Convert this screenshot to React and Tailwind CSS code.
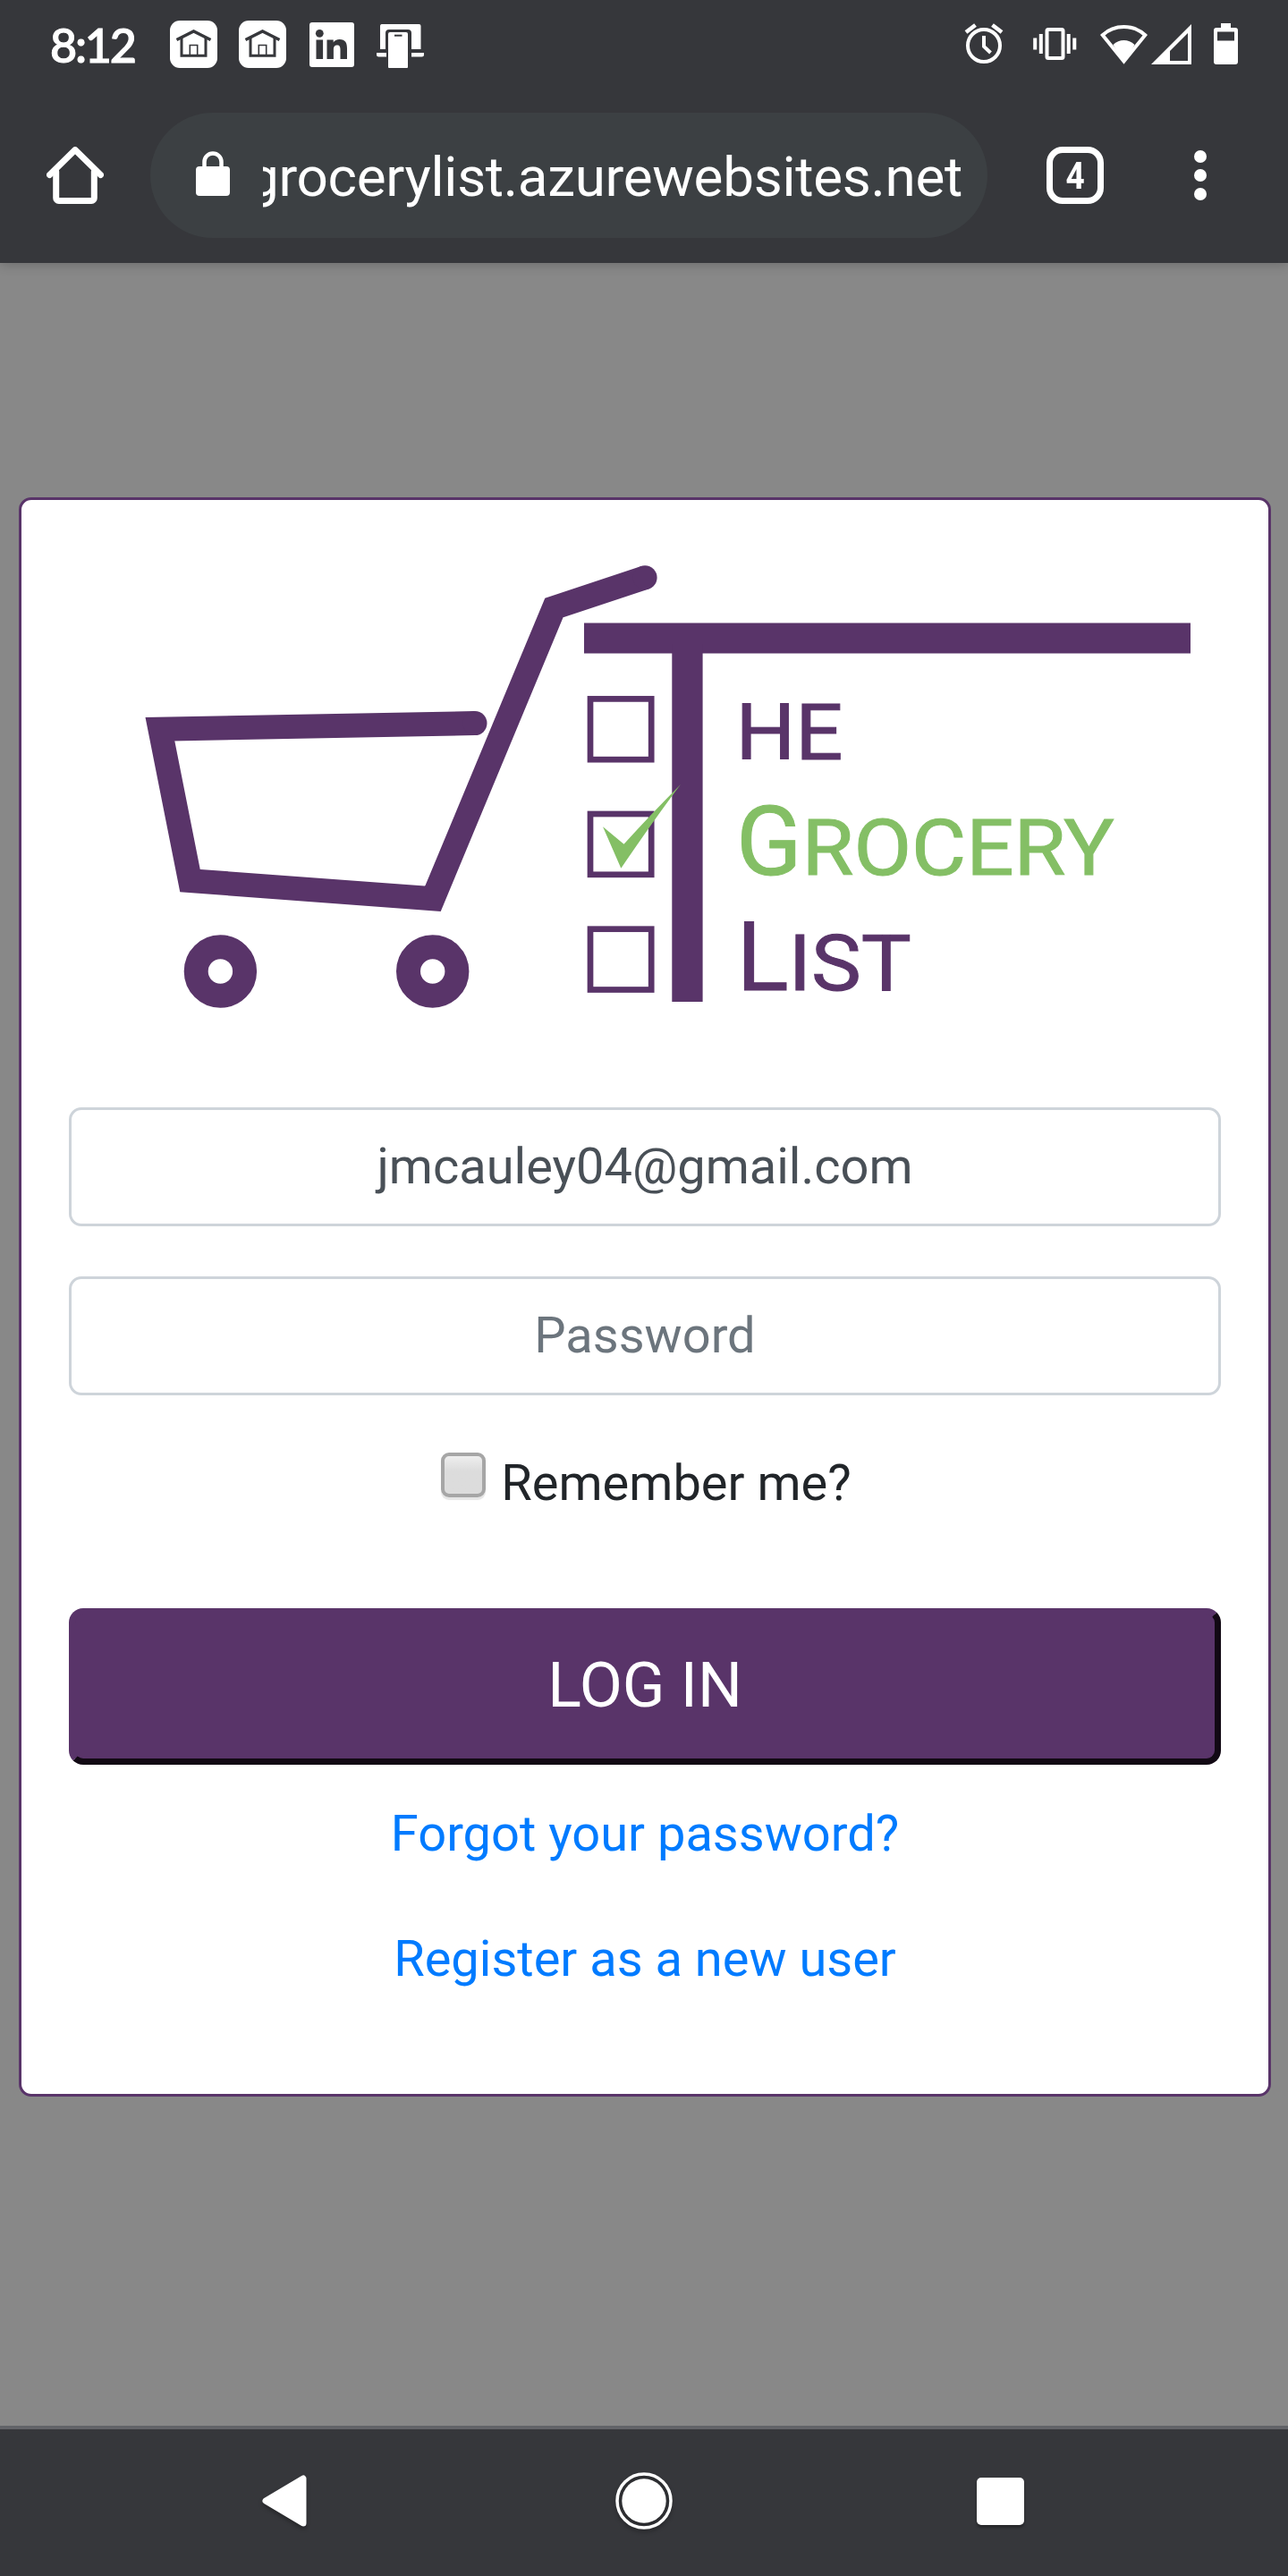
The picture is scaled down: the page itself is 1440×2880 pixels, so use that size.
const PURPLE = '#593469';
const GREEN = '#84bf65';
const BAR = '#36373b';

function HomeBadge() {
  return (
    <svg className="block h-[53px] w-[53px]" viewBox="0 0 53 53">
      <rect width="53" height="53" rx="11" fill="#fff" />
      <path d="M7.5 21.5 26.5 12l19 9.5" fill="none" stroke={BAR} strokeWidth="3.4" />
      <path d="M13 19v20.3h27V19" fill="none" stroke={BAR} strokeWidth="3" />
      <path d="M22.3 38V27.5h8.4V38" fill="none" stroke={BAR} strokeWidth="1.6" />
    </svg>
  );
}

function LinkedInBadge() {
  return (
    <svg className="block h-[50px] w-[50px]" viewBox="0 0 50 50">
      <rect width="50" height="50" rx="3" fill="#fff" />
      <circle cx="11.3" cy="12.3" r="4.4" fill={BAR} />
      <path
        d="M7.5 19.5h7.6V41H7.5zM19.5 19.5h7.2v3c1.2-2.1 3.8-3.5 7-3.5 6.5 0 8.3 4.2 8.3 10.3V41h-7.5V30.5c0-2.9-.6-5-3.6-5-3.1 0-4 2.2-4 5V41h-7.4z"
        fill={BAR}
      />
    </svg>
  );
}

function PhoneCastBadge() {
  return (
    <svg className="block h-[50px] w-[53px]" viewBox="0 0 53 50">
      <path d="M5.500 0h42a2 2 0 0 1 2 2v26H39V10a4 4 0 0 0-4-4H14a4 4 0 0 0-4 4v18H4V2a2 2 0 0 1 1.500-2z" fill="#fff" />
      <path d="M0 32h11v4.500H2.500A2.500 2.500 0 0 1 0 34zM39 32h14v2a2.500 2.500 0 0 1-2.500 2.500H39z" fill="#fff" />
      <path d="M15 9h18a2 2 0 0 1 2 2v37a1 1 0 0 1-1 1H14a1 1 0 0 1-1-1V11a2 2 0 0 1 2-2z" fill="#fff" />
      <path d="M20 12.700h8.500" stroke={BAR} strokeWidth="2" />
    </svg>
  );
}

function AlarmIcon() {
  return (
    <svg className="block h-[46px] w-[44px]" viewBox="0 0 44 46" fill="none" stroke="#fff">
      <circle cx="22" cy="25" r="18" strokeWidth="4" />
      <path d="M2 10 12.500 2M42 10 31.500 2" strokeWidth="4.500" />
      <path d="M22 14v12l7.500 7" strokeWidth="4" />
    </svg>
  );
}

function VibrateIcon() {
  return (
    <svg className="block h-[36px] w-[49px]" viewBox="0 0 49 36" fill="none" stroke="#fff" strokeWidth="4">
      <rect x="15.500" y="2" width="18" height="32" rx="1.500" />
      <path d="M2.200 11.500v13M8.800 7v22M39.700 7v22M46.300 11.500v13" />
    </svg>
  );
}

function WifiIcon() {
  return (
    <svg className="block h-[45px] w-[53px]" viewBox="0 0 53 45">
      <path d="M2.700 12.200C16 0 37 0 50.300 12.200L26.500 41.500z" fill="none" stroke="#fff" strokeWidth="4" />
      <path d="M14.500 23c7-6.800 17-6.800 24 0l-12 21z" fill="#fff" />
    </svg>
  );
}

function SignalIcon() {
  return (
    <svg className="block h-[45px] w-[45px]" viewBox="0 0 45 45">
      <path fillRule="evenodd" d="M45 0v45H0zM41 10 21 30v11h20z" fill="#fff" />
    </svg>
  );
}

function BatteryIcon() {
  return (
    <svg className="block h-[46px] w-[27px]" viewBox="0 0 27 46">
      <path
        fillRule="evenodd"
        d="M8 0h11v5h5a3 3 0 0 1 3 3v35a3 3 0 0 1-3 3H3a3 3 0 0 1-3-3V8a3 3 0 0 1 3-3h5zM4 9.500v10h19v-10z"
        fill="#fff"
      />
    </svg>
  );
}

function StatusBar() {
  return (
    <div className="flex h-[98px] items-center pl-[56px] pr-[56px]">
      <span className="w-[134px] pt-px font-['Lato'] text-[52px] font-medium leading-[98px] tracking-[-2.2px] text-white [-webkit-text-stroke:1.2px_white]">
        8:12
      </span>
      <div className="flex items-center pt-px">
        <HomeBadge />
        <span className="ml-6"><HomeBadge /></span>
        <span className="ml-[26px]"><LinkedInBadge /></span>
        <span className="ml-[25px] mt-1"><PhoneCastBadge /></span>
      </div>
      <div className="ml-auto flex items-center">
        <AlarmIcon />
        <span className="ml-[33px]"><VibrateIcon /></span>
        <span className="ml-[26px]"><WifiIcon /></span>
        <span className="ml-[4px]"><SignalIcon /></span>
        <span className="ml-[25px]"><BatteryIcon /></span>
      </div>
    </div>
  );
}

function AddressBar() {
  return (
    <div className="flex h-[196px] items-center pl-[52px]">
      <svg className="block h-[64px] w-[64px]" viewBox="0 0 64 64" fill="none" stroke="#fff" strokeLinejoin="round" strokeLinecap="round">
        <path d="M3.500 31.500 32 3.500l28.500 28" strokeWidth="7" />
        <path d="M10.700 28v29.500a3 3 0 0 0 3 3h36.600a3 3 0 0 0 3-3V28" strokeWidth="7" />
      </svg>
      <div className="ml-[52px] flex h-[140px] w-[936px] items-center rounded-full bg-[#3c4043] pl-[51px]">
        <svg className="mb-1 block h-[50px] w-[38px]" viewBox="0 0 38 50">
          <rect y="17" width="38" height="33" rx="4" fill="#fff" />
          <path d="M9.500 20v-8a9.500 9.500 0 0 1 19 0v8" fill="none" stroke="#fff" strokeWidth="4.500" />
        </svg>
        <div className="ml-[37px] flex w-[782px] justify-end overflow-hidden pt-1">
          <span className="whitespace-nowrap text-[62px] leading-[90px] tracking-[-0.3px] text-white">grocerylist.azurewebsites.net</span>
        </div>
      </div>
      <div className="ml-[66px] flex h-[64px] w-[64px] items-center justify-center rounded-[18px] border-[7px] border-white">
        <span className="mt-0.5 scale-x-88 text-[42px] font-bold leading-none text-white">4</span>
      </div>
      <div className="ml-[101px] flex flex-col gap-[7px]">
        <i className="block h-[14px] w-[14px] rounded-full bg-white" />
        <i className="block h-[14px] w-[14px] rounded-full bg-white" />
        <i className="block h-[14px] w-[14px] rounded-full bg-white" />
      </div>
    </div>
  );
}

function Logo() {
  return (
    <svg className="block h-[520px] w-[1288px] shrink-0" viewBox="77 620 1288 520">
      <g fill="none" stroke={PURPLE} strokeWidth="27">
        <path d="M531 808.600 178.900 815.200 212.500 984.600 484 1004.800 619.400 679.500 721.100 645.700" strokeMiterlimit="10" />
        <circle cx="246.400" cy="1086" r="27.200" />
        <circle cx="483.700" cy="1086" r="27.200" />
      </g>
      <g fill={PURPLE}>
        <circle cx="531" cy="808.600" r="13.500" />
        <circle cx="721.100" cy="645.700" r="13.500" />
        <rect x="653" y="696.500" width="678" height="34" />
        <rect x="751.300" y="720" width="34.300" height="400" />
      </g>
      <g fill="none" stroke={PURPLE} strokeWidth="6.700">
        <rect x="660" y="781.400" width="68.200" height="67.800" />
        <rect x="660" y="910" width="68.200" height="67.800" />
        <rect x="660" y="1038.700" width="68.200" height="67.800" />
      </g>
      <path d="M674 924.300 697.500 943.700Q730 908 761 877 733 914 694.300 970.700z" fill={GREEN} />
      {/* Small capitals are set slightly wider than the initials. */}
      <g fontFamily="Roboto, sans-serif" strokeWidth="1">
        <g fill={PURPLE} stroke={PURPLE}>
          <text transform="translate(822.5 849) scale(1.076 1)" fontSize="87">HE</text>
          <text x="823.5" y="1107" fontSize="108">L</text>
          <text transform="translate(881.5 1107) scale(1.08 1)" fontSize="87">IST</text>
        </g>
        <g fill={GREEN} stroke={GREEN}>
          <text x="823" y="978" fontSize="108">G</text>
          <text transform="translate(896.5 978) scale(1.08 1)" fontSize="87">ROCERY</text>
        </g>
      </g>
    </svg>
  );
}

function LoginCard() {
  return (
    <div className="ml-[21px] mt-[262px] flex h-[1788px] w-[1400px] flex-col rounded-[14px] border-[3px] border-[#593469] bg-white px-[53px] pt-[61px] text-[56px] leading-[84px]">
      <Logo />
      <input
        type="text"
        defaultValue="jmcauley04@gmail.com"
        className="mt-[98px] h-[133px] w-full shrink-0 rounded-[14px] border-[3px] border-[#ced4da] bg-white pb-[2px] text-center text-[#495057]"
      />
      <input
        type="password"
        placeholder="Password"
        className="mt-14 h-[133px] w-full shrink-0 rounded-[14px] border-[3px] border-[#ced4da] bg-white pb-[2px] text-center placeholder:text-[#6c757d]"
      />
      <label className="mt-14 flex h-[84px] items-center justify-center pl-[3px] text-[#212529]">
        <span className="mb-[18px] mr-[17px] block h-[50px] w-[50px] rounded-[9px] border-4 border-[#a6a6a6] bg-linear-to-b from-[#eeeeee] to-[#dcdcdc] to-40% shadow-[0_3px_1px_#e6e6e6]" />
        Remember me?
      </label>
      <button className="mt-[98px] h-[175px] w-full shrink-0 rounded-[16px] border-[7px] border-b-[#120914] border-l-[#593469] border-r-[#120914] border-t-[#593469] bg-[#593469] pb-1 text-[70px] text-white">
        LOG IN
      </button>
      <a className="mt-[35px] text-center text-[#007bff]">Forgot your password?</a>
      <a className="mt-14 text-center text-[#007bff]">Register as a new user</a>
    </div>
  );
}

function NavBar() {
  return (
    <div className="flex h-[168px] items-center border-t-4 border-[#626368] bg-[#36373b] pb-1">
      <svg className="ml-[292px] block h-[60px] w-[51px] drop-shadow-[0_3px_2px_rgba(0,0,0,0.3)]" viewBox="0 0 51 60">
        <path d="M5 30 47 5v50z" fill="#fff" stroke="#fff" strokeWidth="7" strokeLinejoin="round" />
      </svg>
      <svg className="ml-[345px] block h-[64px] w-[64px] drop-shadow-[0_3px_2px_rgba(0,0,0,0.3)]" viewBox="0 0 64 64">
        <circle cx="32" cy="32" r="30" fill="none" stroke="#fff" strokeWidth="3.500" />
        <circle cx="32" cy="32" r="24.700" fill="#fff" />
      </svg>
      <span className="ml-[340px] block h-[53px] w-[53px] rounded-[5px] bg-white shadow-[0_3px_3px_rgba(0,0,0,0.3)]" />
    </div>
  );
}

export default function App() {
  return (
    <div className="flex h-[2880px] w-[1440px] flex-col overflow-hidden bg-[#888888] font-['Roboto',sans-serif]">
      <header className="h-[294px] shrink-0 bg-[#36373b] shadow-[0_2px_12px_rgba(0,0,0,0.2)]">
        <StatusBar />
        <AddressBar />
      </header>
      <main className="h-[2418px] shrink-0">
        <LoginCard />
      </main>
      <NavBar />
    </div>
  );
}
